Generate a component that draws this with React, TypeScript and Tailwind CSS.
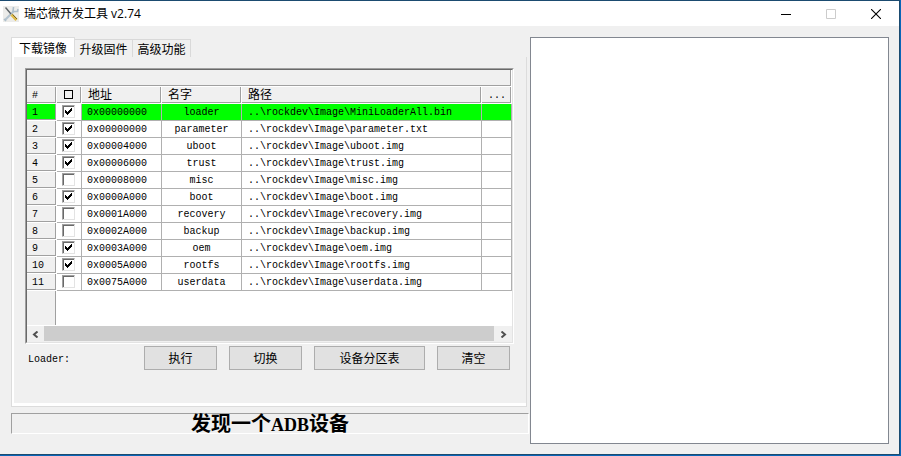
import React, { useState } from "react";

interface Partition {
  address: string;
  name: string;
  path: string;
  checked: boolean;
}

const INITIAL_ROWS: Partition[] = [
  { address: "0x00000000", name: "loader", path: "..\\rockdev\\Image\\MiniLoaderAll.bin", checked: true },
  { address: "0x00000000", name: "parameter", path: "..\\rockdev\\Image\\parameter.txt", checked: true },
  { address: "0x00004000", name: "uboot", path: "..\\rockdev\\Image\\uboot.img", checked: true },
  { address: "0x00006000", name: "trust", path: "..\\rockdev\\Image\\trust.img", checked: true },
  { address: "0x00008000", name: "misc", path: "..\\rockdev\\Image\\misc.img", checked: false },
  { address: "0x0000A000", name: "boot", path: "..\\rockdev\\Image\\boot.img", checked: true },
  { address: "0x0001A000", name: "recovery", path: "..\\rockdev\\Image\\recovery.img", checked: false },
  { address: "0x0002A000", name: "backup", path: "..\\rockdev\\Image\\backup.img", checked: false },
  { address: "0x0003A000", name: "oem", path: "..\\rockdev\\Image\\oem.img", checked: true },
  { address: "0x0005A000", name: "rootfs", path: "..\\rockdev\\Image\\rootfs.img", checked: true },
  { address: "0x0075A000", name: "userdata", path: "..\\rockdev\\Image\\userdata.img", checked: false },
];

const TABS = ["下载镜像", "升级固件", "高级功能"];

// raised grey cell used by the header row and the row numbers
const FIXED_CELL =
  "h-[17px] p-0 border-r border-b border-white shadow-[inset_-1px_-1px_0_#a0a0a0] text-left font-normal";
const DATA_CELL = "h-[17px] p-0 border-r border-b border-[#b0b0b0]";

function TitleBar() {
  return (
    <header className="flex h-[25px] items-center bg-white pl-[3px]">
      <svg width="16" height="16" viewBox="0 0 16 16" fill="none" aria-hidden="true">
        <rect width="16" height="16" fill="#ececea" />
        <path d="M2 14 L11 5" stroke="#b4c4d0" strokeWidth="2.2" />
        <path d="M10.5 1 L10 5.5 L14.5 5.5 L15 3" stroke="#aebfcb" strokeWidth="1.6" />
        <path d="M1 13 L3 15" stroke="#aebfcb" strokeWidth="1.6" />
        <path d="M2.5 1.5 L8 8" stroke="#5c6266" strokeWidth="1.4" />
        <path d="M8.5 8.5 L13.5 14" stroke="#e0bd4a" strokeWidth="3" />
        <path d="M9.5 8.5 L14 13" stroke="#6b5c2e" strokeWidth="0.9" />
      </svg>
      <h1 className="ml-[5px] font-['Open_Sans','Noto_Sans_CJK_SC',sans-serif] text-[12px] leading-4">瑞芯微开发工具 v2.74</h1>
      <div className="ml-auto flex h-full">
        <button type="button" aria-label="最小化" className="flex w-[45px] items-center justify-center">
          <svg width="10" height="10" shapeRendering="crispEdges"><path d="M0 5.5H10" stroke="#000" /></svg>
        </button>
        <button type="button" aria-label="最大化" disabled className="flex w-[45px] items-center justify-center">
          <svg width="10" height="10" fill="none"><path d="M.5 .5H9.5V9.5H.5Z" stroke="#ccc" /></svg>
        </button>
        <button type="button" aria-label="关闭" className="flex w-[46px] items-center justify-center">
          <svg width="10" height="10"><path d="M0 0L10 10M10 0L0 10" stroke="#000" strokeWidth="1.1" /></svg>
        </button>
      </div>
    </header>
  );
}

function CheckBox({ checked, label, onChange }: { checked: boolean; label: string; onChange: () => void }) {
  return (
    <span className="grid h-[15px] w-[23px] place-items-center">
      <input
        type="checkbox"
        checked={checked}
        onChange={onChange}
        aria-label={label}
        className="peer col-start-1 row-start-1 size-[13px] appearance-none border border-t-[#a0a0a0] border-r-[#e3e3e3] border-b-[#e3e3e3] border-l-[#a0a0a0] bg-white shadow-[inset_1px_1px_0_#696969]"
      />
      <svg
        width="7"
        height="7"
        shapeRendering="crispEdges"
        className="pointer-events-none invisible col-start-1 row-start-1 peer-checked:visible"
      >
        <path d="M0 2H1V3H2V4H3V3H4V2H5V1H6V0H7V3H6V4H5V5H4V6H3V7H2V6H1V5H0Z" fill="#000" />
      </svg>
    </span>
  );
}

function PartitionTable() {
  const [rows, setRows] = useState<Partition[]>(INITIAL_ROWS);
  const [selected, setSelected] = useState(0);

  const allChecked = rows.every(r => r.checked);

  const toggle = (index: number) => {
    setRows(prev => prev.map((r, i) => (i === index ? { ...r, checked: !r.checked } : r)));
  };

  return (
    <div className="border border-t-[#a0a0a0] border-r-white border-b-white border-l-[#a0a0a0]">
      <div className="border border-t-[#696969] border-r-[#e3e3e3] border-b-[#e3e3e3] border-l-[#696969] bg-white">
        <table className="w-full table-fixed border-separate border-spacing-0 font-['Liberation_Mono','Noto_Sans_CJK_SC',monospace] text-[10px] leading-[14px]">
          <colgroup>
            <col className="w-[30px]" />
            <col className="w-[25px]" />
            <col className="w-[80px]" />
            <col className="w-[80px]" />
            <col />
            <col className="w-[30px]" />
          </colgroup>
          <thead className="bg-[#f0f0f0]">
            <tr>
              <td colSpan={6} className={FIXED_CELL} />
            </tr>
            <tr>
              <th className={`${FIXED_CELL} align-bottom`}><span className="block pl-[5px]">#</span></th>
              <th className={`${FIXED_CELL} align-top`}>
                <span className="grid h-[15px] w-[23px] place-items-center">
                  <input
                    type="checkbox"
                    aria-label="全选"
                    checked={allChecked}
                    onChange={() => setRows(prev => prev.map(r => ({ ...r, checked: !allChecked })))}
                    className="size-[9px] appearance-none border border-black checked:bg-black"
                  />
                </span>
              </th>
              <th className={`${FIXED_CELL} align-bottom`}><span className="block pl-1.5 text-[12px]">地址</span></th>
              <th className={`${FIXED_CELL} align-bottom`}><span className="block pl-1.5 text-[12px]">名字</span></th>
              <th className={`${FIXED_CELL} align-bottom`}><span className="block pl-1.5 text-[12px]">路径</span></th>
              <th className={`${FIXED_CELL} align-bottom`}><span className="block pl-1.5">...</span></th>
            </tr>
          </thead>
          <tbody>
            {rows.map((row, i) => (
              <tr key={row.path} onClick={() => setSelected(i)} className={i === selected ? "bg-[#00ff00]" : "bg-white"}>
                <th className={`${FIXED_CELL} align-bottom ${i === selected ? "" : "bg-[#f0f0f0]"}`}>
                  <span className="block pl-[5px]">{i + 1}</span>
                </th>
                <td className={`${DATA_CELL} bg-white align-top`}>
                  <CheckBox checked={row.checked} label={row.name} onChange={() => toggle(i)} />
                </td>
                <td className={`${DATA_CELL} align-bottom`}><span className="block pl-[5px]">{row.address}</span></td>
                <td className={`${DATA_CELL} text-center align-bottom`}>{row.name}</td>
                <td className={`${DATA_CELL} align-bottom`}><span className="block pl-1.5">{row.path}</span></td>
                <td className={DATA_CELL} />
              </tr>
            ))}
          </tbody>
        </table>
        <div className="h-[35px] w-[30px] border-r border-b border-white bg-[#f0f0f0] shadow-[inset_-1px_0_0_#a0a0a0]" />
        <div className="flex h-4 bg-[#f0f0f0]">
          <button type="button" aria-label="向左滚动" className="flex w-[17px] items-center justify-center">
            <svg width="7" height="7" fill="none"><path d="M5.5 .5L2 3.5L5.5 6.5" stroke="#505050" strokeWidth="2" /></svg>
          </button>
          <div className="mb-px flex-1 bg-[#cdcdcd]" />
          <button type="button" aria-label="向右滚动" className="flex w-[18px] items-center justify-center">
            <svg width="7" height="7" fill="none"><path d="M1.5 .5L5 3.5L1.5 6.5" stroke="#505050" strokeWidth="2" /></svg>
          </button>
        </div>
      </div>
    </div>
  );
}

function PushButton({ children, wide }: { children: React.ReactNode; wide?: boolean }) {
  return (
    <button
      type="button"
      className={`h-6 border border-[#adadad] bg-[#e1e1e1] text-[12px] leading-4 hover:border-[#0078d7] hover:bg-[#e5f1fb] ${wide ? "w-[111px]" : "w-[73px]"}`}
    >
      {children}
    </button>
  );
}

export default function App() {
  const [tab, setTab] = useState(0);

  return (
    <div className="flex min-h-screen flex-col border-r border-b border-[#0a66b8] bg-[#f0f0f0] font-['Noto_Sans_CJK_SC',sans-serif] text-black">
      <div className="flex flex-1 flex-col border-t border-r border-b border-[#1b4b70]">
        <TitleBar />
        <main className="grid flex-1 grid-cols-[518fr_359fr] gap-px pt-[11px] pr-[10px] pb-[10px] pl-[11px]">
          <div className="flex flex-col self-start">
            <div role="tablist" className="flex h-5 items-end">
              {TABS.map((label, i) => (
                <button
                  key={label}
                  type="button"
                  role="tab"
                  aria-selected={i === tab}
                  onClick={() => setTab(i)}
                  className={
                    i === tab
                      ? "h-5 w-16 border border-b-0 border-[#dcdcdc] bg-white text-[12px] leading-4"
                      : "h-[18px] w-[58px] border-t border-r border-[#d9d9d9] text-[12px] leading-4"
                  }
                >
                  {label}
                </button>
              ))}
            </div>
            <section role="tabpanel" aria-label={TABS[tab]} className="mr-0.5 border-r border-b border-l border-[#dcdcdc]">
              <div className="border-b-[3px] border-l-2 border-white pt-[11px] pr-3 pb-[33px] pl-[11px]">
                <PartitionTable />
                <div className="mt-0.5 flex gap-3 pr-1 pl-[3px]">
                  <span className="mr-auto self-end pb-0.5 font-['Liberation_Mono',monospace] text-[10px] leading-4">Loader:</span>
                  <PushButton>执行</PushButton>
                  <PushButton>切换</PushButton>
                  <PushButton wide>设备分区表</PushButton>
                  <PushButton>清空</PushButton>
                </div>
              </div>
            </section>
            <p
              role="status"
              className="mt-1.5 h-[21px] border border-t-[#a0a0a0] border-r-white border-b-white border-l-[#a0a0a0] text-center font-['Liberation_Serif','Noto_Sans_CJK_SC',serif] text-[20px] leading-5 font-bold"
            >
              发现一个<span className="text-[18px]">ADB</span>设备
            </p>
          </div>
          <textarea readOnly aria-label="日志" className="block h-full w-full resize-none border border-[#828790] bg-white p-1 text-[12px] outline-none" />
        </main>
      </div>
    </div>
  );
}
